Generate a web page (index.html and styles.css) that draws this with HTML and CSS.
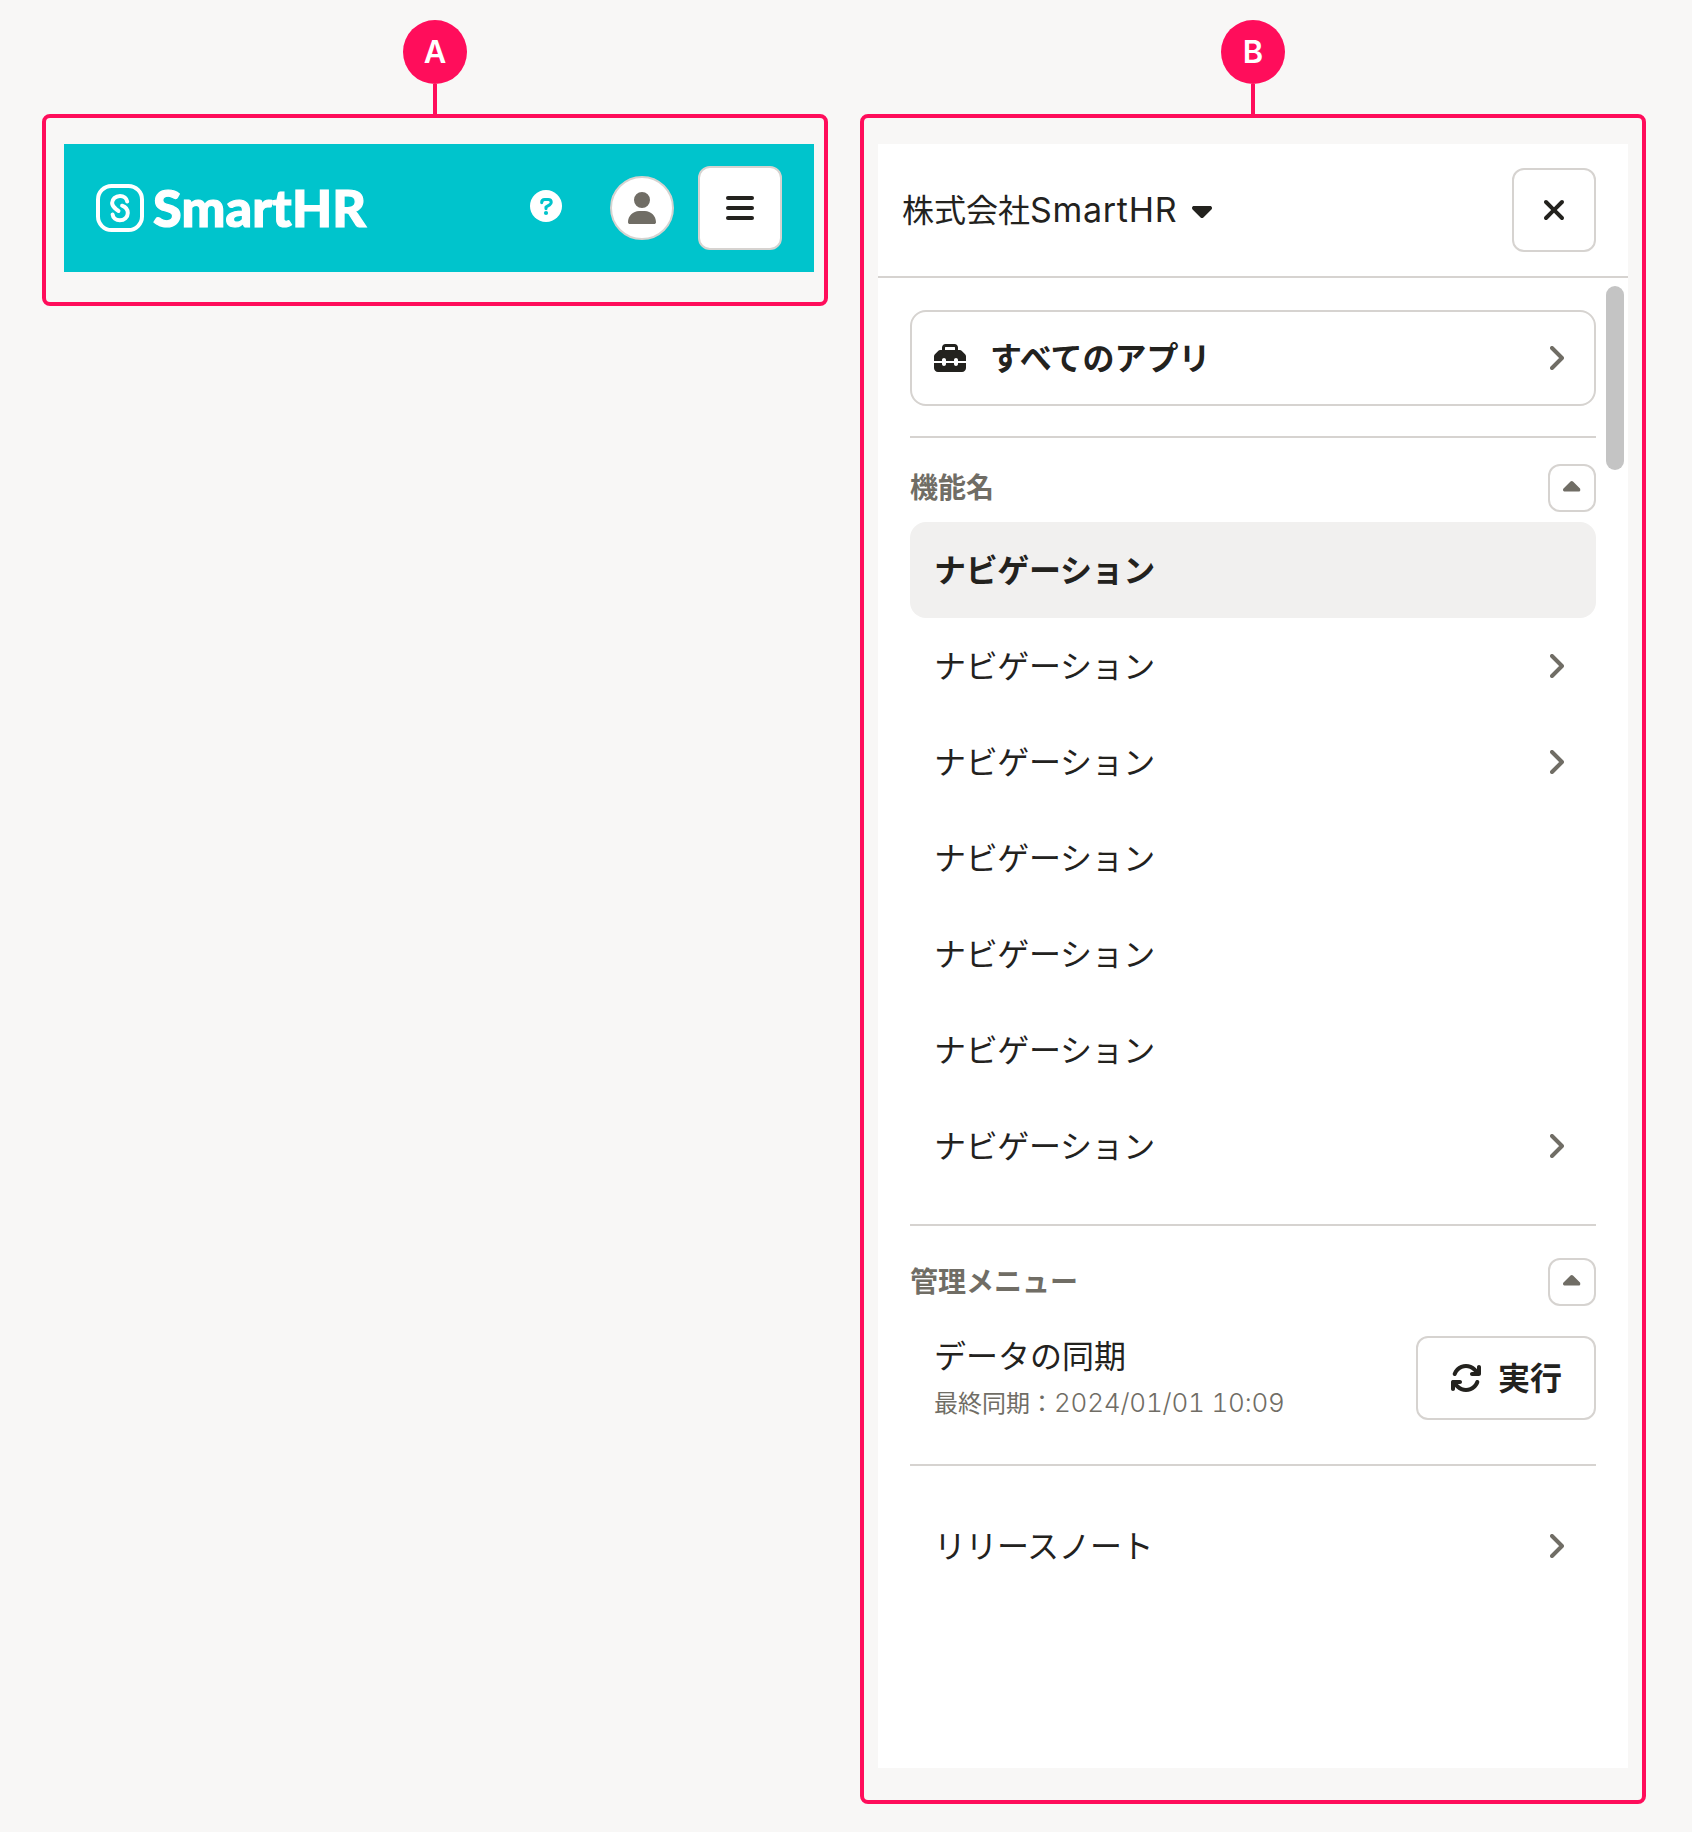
FILE: index.html
```html
<!DOCTYPE html>
<html lang="ja">
<head>
<meta charset="utf-8">
<title>SmartHR</title>
<link rel="stylesheet" href="styles.css">
</head>
<body>
<svg class="sprite" aria-hidden="true">
  <symbol id="chevron" viewBox="0 0 14 24"><path d="M2 2l10 10L2 22" fill="none" stroke="currentColor" stroke-width="4" stroke-linecap="round" stroke-linejoin="round"/></symbol>
  <symbol id="caret-up" viewBox="0 0 320 512"><path d="M182.6 137.4c-12.5-12.5-32.8-12.5-45.3 0l-128 128c-9.2 9.2-11.9 22.9-6.9 34.9s16.6 19.8 29.6 19.8H288c12.9 0 24.6-7.8 29.6-19.8s2.2-25.7-6.9-34.9l-128-128z"/></symbol>
</svg>
<main class="board">
  <section class="callout">
    <div class="marker">A</div>
    <div class="stem"></div>
    <div class="frame frame-a">
      <header class="appbar">
        <div class="logo">
          <svg class="logo-mark" viewBox="0 0 48 48" fill="none" stroke="#fff" stroke-width="4">
            <rect x="2" y="2" width="44" height="44" rx="13.5"/>
            <path stroke-linecap="round" d="M31.2 17.6C30.8 14.2 27.8 11.9 24 11.9c-4.4 0-7.9 3.2-7.9 7.2 0 4.3 3.6 5.6 6.4 7.9M16.6 30.6c.4 3.4 3.4 5.7 7.2 5.7 4.4 0 8-3.2 8-7.2 0-4.3-2.8-6.4-5.7-7.4"/>
          </svg>
          <span class="logo-text">SmartHR</span>
        </div>
        <div class="appbar-actions">
          <svg class="help" viewBox="0 0 32 32">
            <circle cx="16" cy="16" r="16" fill="#fff"/>
            <path d="M11.7 12.6c0-1.800 1.200-3.100 3-3.100h3.400c1.800 0 3.100 1.200 3.100 2.800 0 1.200-.6 2-1.600 2.600L16 17v1.600" fill="none" stroke="#00c4cc" stroke-width="3.100" stroke-linecap="round" stroke-linejoin="round"/>
            <circle cx="16" cy="23" r="2.100" fill="#00c4cc"/>
          </svg>
          <div class="avatar"><svg width="28" height="32" viewBox="0 0 448 512"><path d="M224 256A128 128 0 1 0 224 0a128 128 0 1 0 0 256zm-45.7 48C79.8 304 0 383.8 0 482.3C0 498.7 13.3 512 29.7 512H418.3c16.4 0 29.7-13.3 29.7-29.7C448 383.8 368.2 304 269.7 304H178.3z"/></svg></div>
          <div class="square"><svg width="28" height="32" viewBox="0 0 28 32"><rect y="4" width="28" height="4" rx="2"/><rect y="14" width="28" height="4" rx="2"/><rect y="24" width="28" height="4" rx="2"/></svg></div>
        </div>
      </header>
    </div>
  </section>

  <section class="callout">
    <div class="marker">B</div>
    <div class="stem"></div>
    <div class="frame frame-b">
      <div class="drawer">
        <div class="drawer-head">
          <div class="tenant"><span class="tenant-name">株式会社<span class="latin">SmartHR</span></span>
            <svg width="20" height="32" viewBox="0 0 320 512"><path d="M137.4 374.6c12.5 12.5 32.8 12.5 45.3 0l128-128c9.2-9.2 11.9-22.9 6.9-34.9s-16.6-19.8-29.6-19.8L32 192c-12.9 0-24.6 7.8-29.6 19.8s-2.2 25.7 6.9 34.9l128 128z"/></svg>
          </div>
          <div class="square"><svg width="24" height="32" viewBox="0 0 384 512"><path d="M342.6 150.6c12.5-12.5 12.5-32.8 0-45.3s-32.8-12.5-45.3 0L192 210.7 86.6 105.4c-12.5-12.5-32.8-12.5-45.3 0s-12.5 32.8 0 45.3L146.7 256 41.4 361.4c-12.5 12.5-12.5 32.8 0 45.3s32.8 12.5 45.3 0L192 301.3 297.4 406.6c12.5 12.5 32.8 12.5 45.3 0s12.5-32.8 0-45.3L237.3 256 342.6 150.6z"/></svg></div>
        </div>
        <div class="drawer-body">
          <div class="scroll-thumb"></div>
          <div class="all-apps">
            <svg width="32" height="32" viewBox="0 0 512 512"><path d="M176 88v40H336V88c0-4.4-3.6-8-8-8H184c-4.4 0-8 3.6-8 8zm-48 40V88c0-30.9 25.1-56 56-56H328c30.9 0 56 25.1 56 56v40h28.1c12.7 0 24.9 5.1 33.9 14.1l51.9 51.9c9 9 14.1 21.2 14.1 33.9V304H384V288c0-17.7-14.3-32-32-32s-32 14.3-32 32v16H192V288c0-17.7-14.3-32-32-32s-32 14.3-32 32v16H0V227.9c0-12.7 5.1-24.9 14.1-33.9l51.9-51.9c9-9 21.2-14.1 33.9-14.1H128zM0 416V336H128v16c0 17.7 14.3 32 32 32s32-14.3 32-32V336H320v16c0 17.7 14.3 32 32 32s32-14.3 32-32V336H512v80c0 35.3-28.7 64-64 64H64c-35.3 0-64-28.7-64-64z"/></svg>
            <span class="label">すべてのアプリ</span>
            <svg class="chevron"><use href="#chevron"/></svg>
          </div>
          <div class="group group-features">
            <div class="group-head"><h2>機能名</h2><div class="toggle"><svg><use href="#caret-up"/></svg></div></div>
            <ul class="nav">
              <li class="current"><span class="label">ナビゲーション</span></li>
              <li><span class="label">ナビゲーション</span><svg class="chevron"><use href="#chevron"/></svg></li>
              <li><span class="label">ナビゲーション</span><svg class="chevron"><use href="#chevron"/></svg></li>
              <li><span class="label">ナビゲーション</span></li>
              <li><span class="label">ナビゲーション</span></li>
              <li><span class="label">ナビゲーション</span></li>
              <li><span class="label">ナビゲーション</span><svg class="chevron"><use href="#chevron"/></svg></li>
            </ul>
          </div>
          <div class="group group-admin">
            <div class="group-head"><h2>管理メニュー</h2><div class="toggle"><svg><use href="#caret-up"/></svg></div></div>
            <div class="sync">
              <div class="sync-text">
                <p class="sync-title">データの同期</p>
                <p class="sync-time">最終同期：<span class="digits">2024/01/01 10:09</span></p>
              </div>
              <div class="run">
                <svg width="32" height="32" viewBox="0 0 512 512"><path d="M105.1 202.6c7.7-21.8 20.2-42.3 37.8-59.8c62.5-62.5 163.8-62.5 226.3 0L386.3 160H352c-17.7 0-32 14.3-32 32s14.3 32 32 32H463.5h.4c17.7 0 32-14.3 32-32V80c0-17.7-14.3-32-32-32s-32 14.3-32 32v35.2L414.4 97.6c-87.5-87.5-229.3-87.5-316.8 0C73.2 122 55.6 150.7 44.8 181.4c-5.9 16.7 2.9 34.9 19.5 40.8s34.9-2.9 40.8-19.5zM39 289.3c-5 1.5-9.8 4.2-13.7 8.2c-4 4-6.7 8.8-8.1 14c-.3 1.2-.6 2.5-.8 3.8c-.3 1.7-.4 3.4-.4 5.1V432c0 17.7 14.3 32 32 32s32-14.3 32-32V396.9l17.6 17.5c87.5 87.4 229.3 87.4 316.7 0c24.4-24.4 42.1-53.1 52.9-83.7c5.9-16.7-2.9-34.9-19.5-40.8s-34.9 2.9-40.8 19.5c-7.7 21.8-20.2 42.3-37.8 59.8c-62.5 62.5-163.8 62.5-226.3 0l-.1-.1L125.6 352H160c17.7 0 32-14.3 32-32s-14.3-32-32-32H48.4c-1.6 0-3.2 .1-4.8 .3s-3.1 .5-4.6 1z"/></svg>
                <span class="run-label">実行</span>
              </div>
            </div>
          </div>
          <div class="group group-notes">
            <ul class="nav"><li><span class="label notes">リリースノート</span><svg class="chevron"><use href="#chevron"/></svg></li></ul>
          </div>
        </div>
      </div>
    </div>
  </section>
</main>
</body>
</html>
```
FILE: styles.css
```css
* { box-sizing: border-box; }

body {
  margin: 0;
  background: #f8f7f6;
  color: #23221e;
  font-family: "Noto Sans CJK JP", sans-serif;
  font-size: 32px;
  line-height: 1;
}

h2, p, ul { margin: 0; padding: 0; }
ul { list-style: none; }
svg { display: block; flex: none; fill: currentColor; }
.sprite { position: absolute; width: 0; height: 0; }

.board {
  display: flex;
  align-items: flex-start;
  gap: 32px;
  height: 1832px;
  padding: 20px 46px 0 42px;
}

/* Callout: lettered marker, stem and outlined frame */
.callout {
  display: flex;
  flex-direction: column;
  align-items: center;
  width: 786px;
}
.marker {
  display: flex;
  align-items: center;
  justify-content: center;
  width: 64px;
  height: 64px;
  padding-bottom: 2px;
  border-radius: 50%;
  background: #ff0d5b;
  color: #fff;
  font: 600 31px/1 Inter, sans-serif;
}
.stem { width: 4px; height: 30px; background: #ff0d5b; }
.frame {
  width: 100%;
  border: 4px solid #ff0d5b;
  border-radius: 8px;
}
.frame-a { height: 192px; padding: 26px 10px 30px 18px; }
.frame-b { height: 1690px; padding: 26px 14px; }

/* App header */
.appbar {
  display: flex;
  align-items: center;
  justify-content: space-between;
  height: 128px;
  padding: 0 32px;
  background: #00c4cc;
}
.logo { display: flex; align-items: center; gap: 9px; }
.logo-mark { width: 48px; height: 48px; fill: none; }
.logo-text {
  padding-bottom: 2px;
  color: #fff;
  font: 900 52px/48px Lato, sans-serif;
  letter-spacing: 0.2px;
  -webkit-text-stroke: 1.2px #fff;
}
.appbar-actions { display: flex; align-items: center; }
.help { width: 32px; height: 32px; margin: 0 48px 4px 0; }
.avatar {
  display: flex;
  align-items: center;
  justify-content: center;
  width: 64px;
  height: 64px;
  margin-right: 24px;
  border: 2px solid #d6d3d0;
  border-radius: 50%;
  background: #fff;
  color: #706d65;
}
.square {
  display: flex;
  align-items: center;
  justify-content: center;
  width: 84px;
  height: 84px;
  border: 2px solid #d6d3d0;
  border-radius: 12px;
  background: #fff;
}

/* Drawer */
.drawer { width: 750px; height: 1624px; background: #fff; }
.drawer-head {
  display: flex;
  align-items: center;
  justify-content: space-between;
  height: 134px;
  padding: 0 32px 0 24px;
  border-bottom: 2px solid #d6d3d0;
}
.tenant { display: flex; align-items: center; gap: 15px; }
.tenant-name { padding-bottom: 2px; }
.latin { font-family: Inter, sans-serif; font-size: 34px; letter-spacing: 0.7px; }
.drawer-body { position: relative; padding: 32px; }
.scroll-thumb {
  position: absolute;
  top: 8px;
  right: 4px;
  width: 18px;
  height: 184px;
  border-radius: 9px;
  background: #c4c4c4;
}
.label { flex: 1; padding-bottom: 5px; }
.chevron { width: 14px; height: 24px; color: #706d65; }
.all-apps {
  display: flex;
  align-items: center;
  gap: 24px;
  height: 96px;
  padding: 0 30px 0 22px;
  border: 2px solid #d6d3d0;
  border-radius: 16px;
  font-weight: 700;
}
.group { border-top: 2px solid #d6d3d0; }
.group-features { margin-top: 30px; padding-top: 26px; }
.group-admin { margin-top: 30px; padding-top: 32px; }
.group-notes { margin-top: 44px; padding-top: 32px; }
.group-head {
  display: flex;
  align-items: center;
  justify-content: space-between;
  color: #706d65;
}
.group-head h2 { padding-bottom: 4px; font-size: 28px; font-weight: 700; }
.toggle {
  display: flex;
  align-items: center;
  justify-content: center;
  width: 48px;
  height: 48px;
  border: 2px solid #d6d3d0;
  border-radius: 12px;
}
.toggle svg { width: 17.5px; height: 28px; }
.group-features .nav { margin-top: 10px; }
.nav li {
  display: flex;
  align-items: center;
  height: 96px;
  padding: 0 32px 0 24px;
  letter-spacing: -0.35px;
}
.nav .notes { letter-spacing: -0.5px; }
.nav .current {
  border-radius: 16px;
  background: #f1f0ef;
  font-weight: 700;
}
.sync {
  display: flex;
  align-items: center;
  justify-content: space-between;
  margin-top: 30px;
  padding-left: 24px;
}
.sync-text {
  display: flex;
  flex-direction: column;
  gap: 20px;
  padding-bottom: 3px;
}
.sync-time { color: #706d65; font-size: 24px; }
.digits {
  font-family: Inter, sans-serif;
  font-size: 26px;
  font-weight: 350;
  font-variant-numeric: tabular-nums;
  letter-spacing: -0.2px;
}
.run {
  display: flex;
  align-items: center;
  gap: 16px;
  width: 180px;
  height: 84px;
  padding-left: 32px;
  border: 2px solid #d6d3d0;
  border-radius: 12px;
  font-weight: 700;
}
.run-label { padding-bottom: 4px; }
```
